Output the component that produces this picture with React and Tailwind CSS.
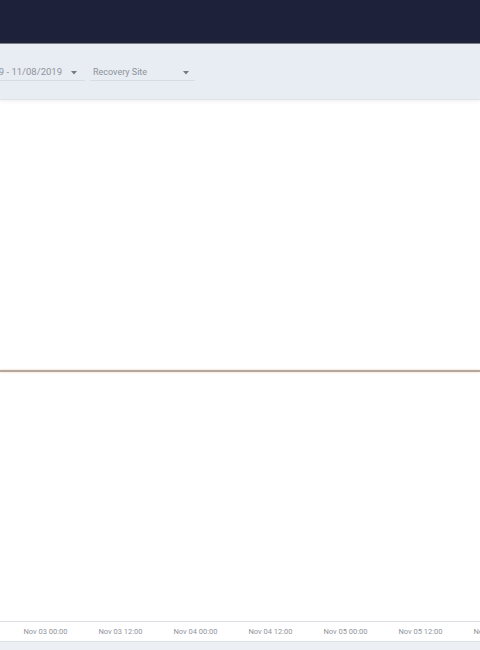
const ticks = [
  "Nov 03 00:00",
  "Nov 03 12:00",
  "Nov 04 00:00",
  "Nov 04 12:00",
  "Nov 05 00:00",
  "Nov 05 12:00",
  "Nov 06 00:00",
];

function Caret() {
  return (
    <svg width="6" height="4" viewBox="0 0 6 4" className="shrink-0">
      <path d="M0 0 L6 0 L3 3.5 Z" fill="#737985" />
    </svg>
  );
}

export default function App() {
  return (
    <div className="w-[480px] h-[650px] overflow-hidden bg-white flex flex-col font-['Roboto',sans-serif]">
      {/* top nav */}
      <header className="h-[44px] shrink-0 bg-[#1d2139] border-b border-[#7b7f8c]" />

      {/* filter bar */}
      <div className="h-[56px] shrink-0 bg-[#e8ecf3] border-b border-[#dfe3ea] shadow-[0_2px_3px_rgba(0,0,0,0.05)] flex items-start pt-[15px] gap-[5px]">
        <div className="w-[85px] h-[22px] flex items-center pt-[6px] border-b border-[#d7dbe2]">
          <div className="flex-1 overflow-hidden flex justify-end">
            <span className="whitespace-nowrap text-[9.5px] text-[#8d939b] shrink-0">11/02/2019 - 11/08/2019</span>
          </div>
          <div className="w-[23px] flex justify-center">
            <Caret />
          </div>
        </div>
        <div className="w-[105px] h-[22px] flex items-center pt-[6px] border-b border-[#d7dbe2] pl-[3px]">
          <span className="flex-1 whitespace-nowrap text-[9px] text-[#8d939b]">Recovery Site</span>
          <div className="w-[18px] flex justify-center">
            <Caret />
          </div>
        </div>
      </div>

      {/* chart */}
      <div className="flex-1 flex flex-col">
        <div className="flex-1 pt-[270px]">
          <div className="h-[2px] bg-[#b3a89e] shadow-[0_0_2px_rgba(230,150,90,0.6)]" />
        </div>
        <div className="h-[21px] shrink-0 border-t border-b border-[#dcdfe4] flex items-center pl-[8px]">
          {ticks.map((t) => (
            <div key={t} className="w-[75px] shrink-0 text-center text-[7.5px] text-[#8f949b] whitespace-nowrap">
              {t}
            </div>
          ))}
        </div>
      </div>
      <div className="h-[8px] shrink-0 bg-[#eceff4]" />
    </div>
  );
}
